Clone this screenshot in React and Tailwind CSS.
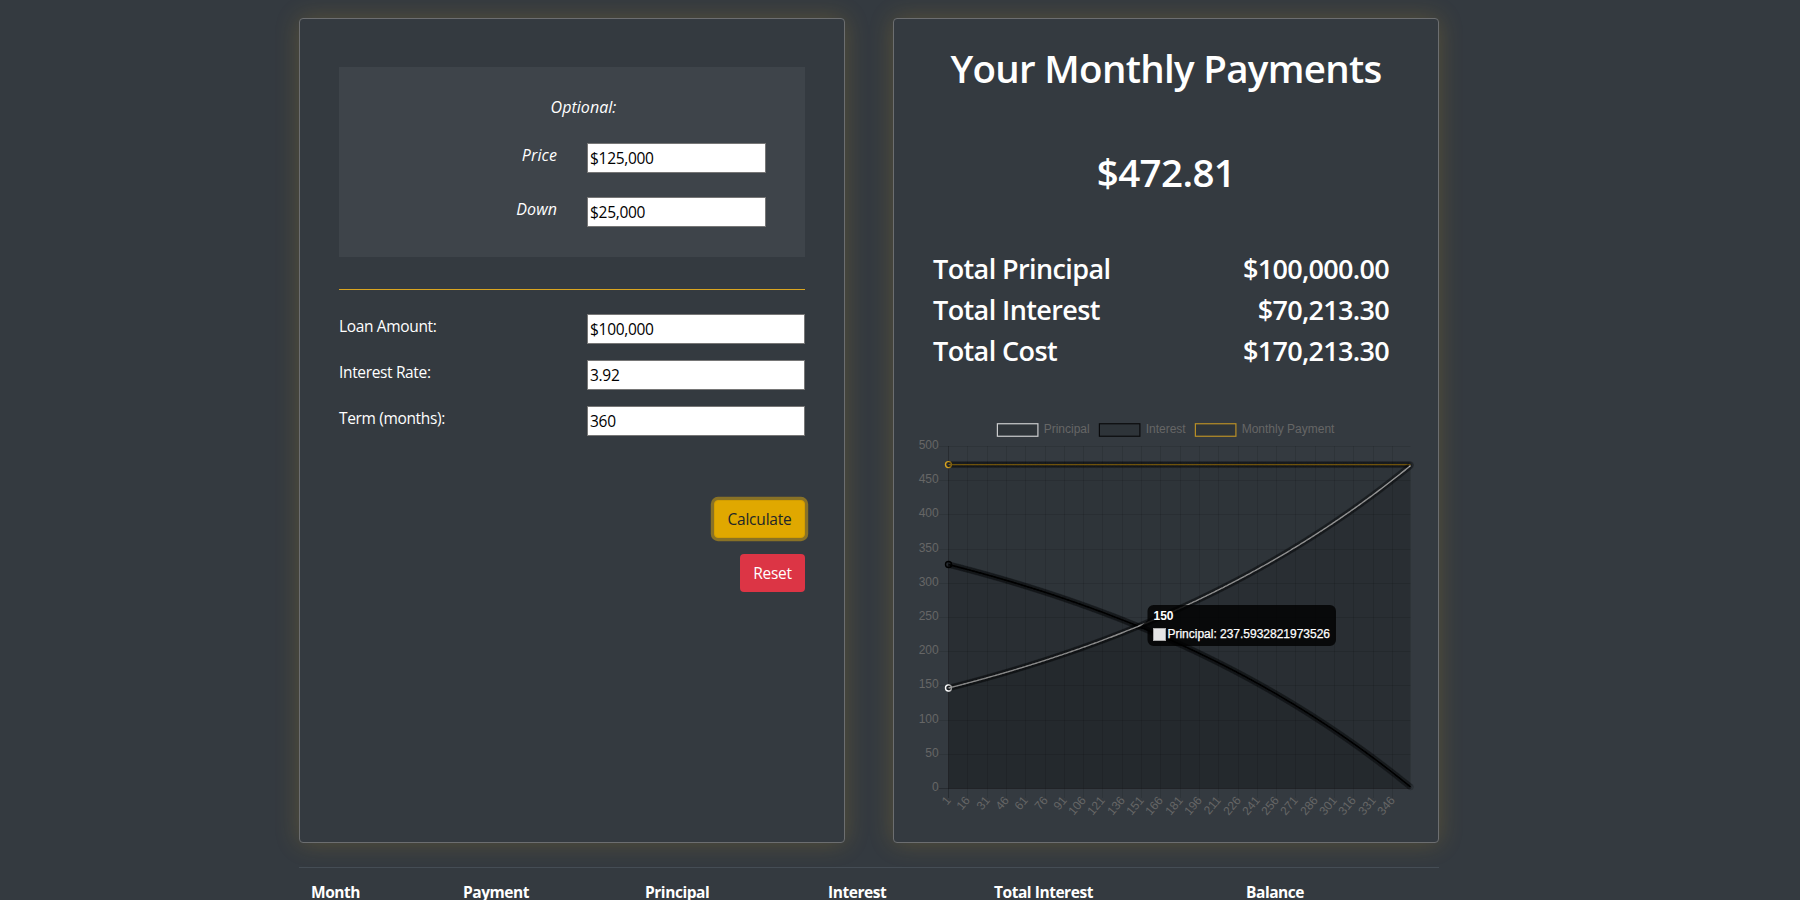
const PLOT = { left: 948.5, right: 1410.5, top: 446.5, bottom: 788.5 };
const MONTHS = 360;
const RATE = 3.92 / 1200;
const LOAN = 100000;
const PAYMENT = (LOAN * RATE) / (1 - Math.pow(1 + RATE, -MONTHS));

const xAt = (i) => PLOT.left + (i * (PLOT.right - PLOT.left)) / (MONTHS - 1);
const yAt = (v) => PLOT.bottom - 0.5 - (v * (PLOT.bottom - PLOT.top)) / 500;

const principal = [];
const interest = [];
const payment = [];
let balance = LOAN;
for (let i = 0; i < MONTHS; i += 1) {
  const due = balance * RATE;
  interest.push([xAt(i), yAt(due)]);
  principal.push([xAt(i), yAt(PAYMENT - due)]);
  payment.push([xAt(i), yAt(PAYMENT)]);
  balance -= PAYMENT - due;
}

const toPath = (pts) => "M" + pts.map((p) => p[0].toFixed(2) + " " + p[1].toFixed(2)).join("L");

function Series({ pts, color }) {
  const d = toPath(pts);
  return (
    <g>
      <path d={`${d}L${PLOT.right} ${PLOT.bottom}L${PLOT.left} ${PLOT.bottom}Z`} fill="rgba(0,0,0,0.1)" />
      <path d={d} fill="none" stroke={color} strokeWidth="1.4" />
      {pts.map((p, i) => (
        <circle
          key={i}
          cx={p[0]}
          cy={p[1]}
          r="3"
          fill="rgba(0,0,0,0.1)"
          stroke={i === 0 ? color : "rgba(0,0,0,0.1)"}
          strokeWidth={i === 0 ? 1.4 : 1}
        />
      ))}
    </g>
  );
}

function LegendItem({ x, label, color }) {
  return (
    <g>
      <rect x={x} y="423.75" width="40.5" height="12.5" fill="rgba(0,0,0,0.1)" stroke={color} strokeWidth="1.2" />
      <text x={x + 46.3} y="433">{label}</text>
    </g>
  );
}

function Chart() {
  const rows = Array.from({ length: 11 }, (_, i) => i);
  const cols = Array.from({ length: 24 }, (_, i) => i);
  return (
    <svg
      className="block h-[410px] w-[510px] font-['Liberation_Sans',Arial,sans-serif] text-[12px]"
      viewBox="910 410 510 410"
      fill="#666"
    >
      <LegendItem x={997.4} label="Principal" color="rgba(255,255,255,0.75)" />
      <LegendItem x={1099.4} label="Interest" color="rgba(0,0,0,0.8)" />
      <LegendItem x={1195.4} label="Monthly Payment" color="rgba(218,165,32,0.8)" />
      {rows.map((i) => {
        const y = Math.floor(788.4 - i * 34.2) + 0.5;
        return (
          <g key={i}>
            <path d={`M939 ${y}H1410.5`} stroke={i === 0 ? "rgba(0,0,0,0.25)" : "rgba(0,0,0,0.1)"} />
            <text x="938.7" y={y + 2.5} textAnchor="end">{i * 50}</text>
          </g>
        );
      })}
      {cols.map((i) => {
        const x = Math.floor(xAt(i * 15)) + 0.5;
        return (
          <g key={i}>
            <path d={`M${x} 446V798`} stroke={i === 0 ? "rgba(0,0,0,0.25)" : "rgba(0,0,0,0.1)"} />
            <text transform={`translate(${x} 798) rotate(-50)`} y="4" textAnchor="end">{i * 15 + 1}</text>
          </g>
        );
      })}
      <Series pts={payment} color="goldenrod" />
      <Series pts={interest} color="#000" />
      <Series pts={principal} color="#fff" />
      <path
        d="M1153.5 605H1330a6 6 0 0 1 6 6V640a6 6 0 0 1 -6 6H1153.5a6 6 0 0 1 -6 -6V631L1141.5 625.5L1147.5 620.5V611a6 6 0 0 1 6 -6Z"
        fill="rgba(0,0,0,0.8)"
      />
      <text x="1153.5" y="620" fill="#fff" fontWeight="700">150</text>
      <rect x="1153.5" y="628.5" width="12" height="12" fill="#e5e5e5" stroke="#aaa" />
      <text x="1167.5" y="638" fill="#fff" stroke="#fff" strokeWidth="0.25" textLength="162.5">
        Principal: 237.5932821973526
      </text>
    </svg>
  );
}

const CARD =
  "h-[825px] w-[546px] rounded-[4px] border border-[#6c6e70] bg-[#343a40] shadow-[0_0_24px_rgba(218,165,32,0.22)]";

function Field({ value, width }) {
  return (
    <input
      className={`${width} h-[30px] border border-[#767676] bg-white px-[2px] text-[15.5px] tracking-[-0.3px] text-black`}
      defaultValue={value}
    />
  );
}

function LoanRow({ label, value }) {
  return (
    <div className="mb-4 flex h-[30px] justify-between">
      <label className="tracking-[-0.35px]">{label}</label>
      <Field value={value} width="w-[218px]" />
    </div>
  );
}

function OptionalRow({ label, value }) {
  return (
    <div className="mb-6 flex h-[30px] justify-end gap-[30px]">
      <label className="text-[16px] tracking-[0.1px] italic">{label}</label>
      <Field value={value} width="w-[179px]" />
    </div>
  );
}

function Total({ label, value }) {
  return (
    <div className="flex h-[41px] items-start justify-between">
      <span className="tracking-[-0.6px]">{label}</span>
      <span className="tracking-[-0.7px]">{value}</span>
    </div>
  );
}

export default function App() {
  return (
    <div className="h-[900px] w-full overflow-hidden bg-[#343a40] pt-[18px] pl-[299px] font-['Open_Sans','Noto_Sans',sans-serif] text-[15.5px] leading-6 text-white">
      <div className="flex w-[1140px] justify-between">
        <section className={CARD}>
          <div className="mx-[39px] mt-12 h-[190px] bg-white/5 pt-7 pr-[39px]">
            <p className="mb-[24px] pl-[62px] text-center text-[16px] tracking-[0.05px] italic">Optional:</p>
            <OptionalRow label="Price" value="$125,000" />
            <OptionalRow label="Down" value="$25,000" />
          </div>
          <hr className="mx-[39px] mt-8 mb-6 border-[#daa520]" />
          <div className="mx-[39px]">
            <LoanRow label="Loan Amount:" value="$100,000" />
            <LoanRow label="Interest Rate:" value="3.92" />
            <LoanRow label="Term (months):" value="360" />
          </div>
          <div className="mx-[39px] mt-[64px] flex flex-col items-end gap-4">
            <button className="h-[38px] w-[91px] rounded-[4px] border border-[#d39e00] bg-[#e0a800] tracking-[-0.2px] text-[#212529] shadow-[0_0_0_3.2px_rgba(222,170,12,0.5)]">
              Calculate
            </button>
            <button className="h-[38px] w-[65px] rounded-[4px] bg-[#dc3545] tracking-[-0.3px]">Reset</button>
          </div>
        </section>

        <section className={CARD}>
          <h1 className="mt-[25px] text-center text-[38.5px] leading-[48px] font-semibold tracking-[-0.7px]">
            Your Monthly Payments
          </h1>
          <p className="mt-14 text-center text-[38.5px] leading-[48px] font-semibold tracking-[-0.6px]">$472.81</p>
          <div className="mt-[56px] mr-[49px] ml-[39px] text-[27px] leading-[34px] font-semibold">
            <Total label="Total Principal" value="$100,000.00" />
            <Total label="Total Interest" value="$70,213.30" />
            <Total label="Total Cost" value="$170,213.30" />
          </div>
          <div className="mt-[35px] ml-4">
            <Chart />
          </div>
        </section>
      </div>

      <div className="mt-[24px] grid w-[1140px] grid-cols-[152px_182px_183px_166px_252px_1fr] border-t border-[#454d55] pt-3 font-bold tracking-[-0.45px]">
        <span className="pl-3">Month</span>
        <span className="pl-3">Payment</span>
        <span className="pl-3">Principal</span>
        <span className="pl-3">Interest</span>
        <span className="pl-3">Total Interest</span>
        <span className="pl-3">Balance</span>
      </div>
    </div>
  );
}
